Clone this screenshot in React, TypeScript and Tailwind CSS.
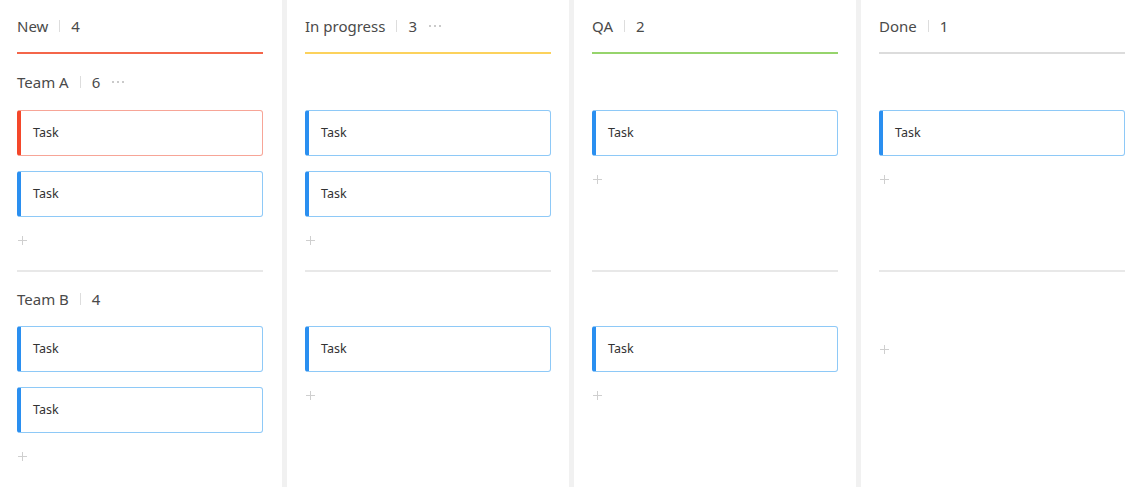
import React from "react";

type Card = { accent: "red" | "blue" };
type Lane = { cards: Card[] };
type Column = {
  title: string;
  count: number;
  line: string;
  dots?: boolean;
  lanes: [Lane, Lane];
};

const teams = [
  { name: "Team A", count: 6, dots: true },
  { name: "Team B", count: 4, dots: false },
];

const columns: Column[] = [
  {
    title: "New",
    count: 4,
    line: "bg-[#f4664a]",
    lanes: [{ cards: [{ accent: "red" }, { accent: "blue" }] }, { cards: [{ accent: "blue" }, { accent: "blue" }] }],
  },
  {
    title: "In progress",
    count: 3,
    line: "bg-[#fcd25c]",
    dots: true,
    lanes: [{ cards: [{ accent: "blue" }, { accent: "blue" }] }, { cards: [{ accent: "blue" }] }],
  },
  {
    title: "QA",
    count: 2,
    line: "bg-[#96d46c]",
    lanes: [{ cards: [{ accent: "blue" }] }, { cards: [{ accent: "blue" }] }],
  },
  {
    title: "Done",
    count: 1,
    line: "bg-[#dcdcdc]",
    lanes: [{ cards: [{ accent: "blue" }] }, { cards: [] }],
  },
];

function Dots() {
  return (
    <span className="ml-[12px] flex items-center gap-[3px]">
      <span className="h-[2px] w-[2px] rounded-full bg-[#b8b8b8]" />
      <span className="h-[2px] w-[2px] rounded-full bg-[#b8b8b8]" />
      <span className="h-[2px] w-[2px] rounded-full bg-[#b8b8b8]" />
    </span>
  );
}

function Label({ name, count, dots }: { name: string; count: number; dots?: boolean }) {
  return (
    <div className="flex items-center text-[15px] text-[#4a4a4a]">
      <span>{name}</span>
      <span className="mx-[11px] h-[12px] w-px bg-[#dddddd]" />
      <span>{count}</span>
      {dots && <Dots />}
    </div>
  );
}

function TaskCard({ accent }: Card) {
  const red = accent === "red";
  return (
    <div
      className={`flex h-[46px] items-center rounded-[3px] border border-l-[4px] pl-[12px] text-[12.5px] text-[#333] ${
        red ? "border-[#f7a597] border-l-[#f4472a]" : "border-[#8ec9f7] border-l-[#2a8ff0]"
      }`}
    >
      Task
    </div>
  );
}

function Plus() {
  return (
    <div className="flex h-[46px] items-center pl-[1px]">
      <svg width="9" height="9" viewBox="0 0 9 9">
        <path d="M4.5 0v9M0 4.5h9" stroke="#cfcfcf" strokeWidth="1" />
      </svg>
    </div>
  );
}

export default function App() {
  return (
    <div
      className="grid h-[487px] w-[1143px] grid-cols-4 gap-[5px] overflow-hidden bg-[#f1f1f1]"
      style={{ fontFamily: '"Noto Sans", "Open Sans", sans-serif' }}
    >
      {columns.map((col, ci) => (
        <div
          key={col.title}
          className={`flex flex-col bg-white ${ci === 0 ? "pl-[17px] pr-[19px]" : "pl-[18px] pr-[18px]"}`}
        >
          {/* column header */}
          <div className="flex h-[52px] items-center">
            <Label name={col.title} count={col.count} dots={col.dots} />
          </div>
          <div className={`h-[2px] ${col.line}`} />

          {col.lanes.map((lane, li) => (
            <div key={li} className={`flex flex-col ${li === 0 ? "h-[218px] border-b-2 border-[#e8e8e8]" : ""}`}>
              <div className={`flex items-center ${li === 0 ? "h-[56px]" : "h-[54px]"}`}>
                {ci === 0 && <Label name={teams[li].name} count={teams[li].count} dots={teams[li].dots} />}
              </div>
              <div className="flex flex-col gap-[15px]">
                {lane.cards.map((c, i) => (
                  <TaskCard key={i} accent={c.accent} />
                ))}
              </div>
              <Plus />
            </div>
          ))}
        </div>
      ))}
    </div>
  );
}
